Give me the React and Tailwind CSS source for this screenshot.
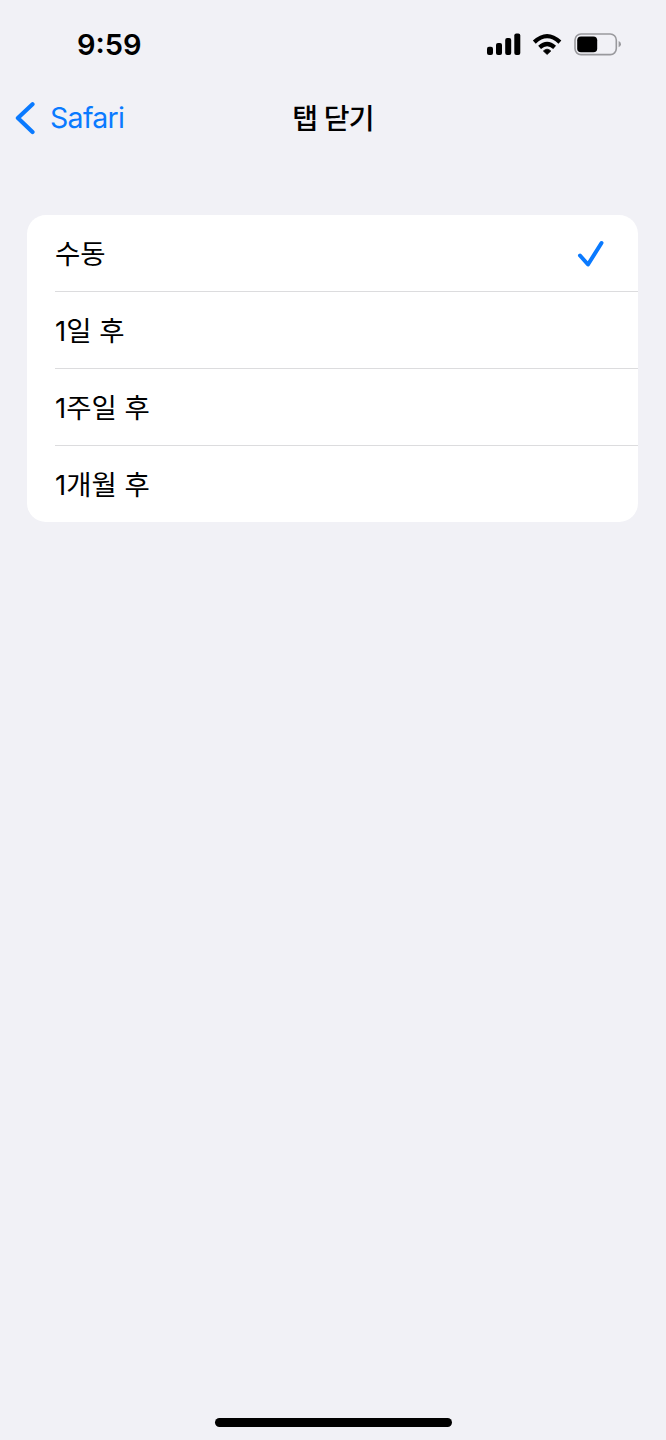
const OPTIONS = ['수동', '1일 후', '1주일 후', '1개월 후'];

function StatusIcons() {
  return (
    <svg className="block h-[30px] w-[140px]" viewBox="484 29 140 30">
      <g fill="#000">
        <rect x="487" y="46.8" width="6" height="8.2" rx="2" />
        <rect x="496" y="43" width="6" height="12" rx="2" />
        <rect x="505.2" y="38" width="6" height="17" rx="2" />
        <rect x="514.3" y="33.5" width="6" height="21.5" rx="2" />
        <path d="M543.4 51Q547.1 47.4 550.8 51L547.1 54.4Z" stroke="#000" strokeWidth="0.8" strokeLinejoin="round" />
      </g>
      <g fill="none" stroke="#000" strokeWidth="4.2">
        <path d="M534.3 42.1Q547.1 30.1 559.9 42.1" />
        <path d="M539.6 47.4Q547.1 40.6 554.6 47.4" />
      </g>
      <rect x="575" y="34" width="41.3" height="20.6" rx="6" fill="none" stroke="#99999d" strokeWidth="1.6" />
      <rect x="577.2" y="36.4" width="20" height="15.8" rx="3.8" fill="#000" />
      <path d="M618.6 41.1Q621 42.2 621 44.2T618.6 47.3Z" fill="#99999d" />
    </svg>
  );
}

export default function App() {
  return (
    <div className="flex h-[1440px] w-[666px] flex-col bg-[#f1f1f6] font-['Inter','Noto_Sans_CJK_KR',sans-serif] text-black">
      <header className="flex h-[88px] items-center justify-between pr-[42px] pl-[77px]">
        <span className="flex text-[29px] leading-none font-semibold">
          <span>9</span>
          <span className="-translate-y-0.5">:</span>
          <span>59</span>
        </span>
        <StatusIcons />
      </header>
      <nav className="grid h-[60px] grid-cols-3 items-center">
        <button className="flex items-center gap-[14px] pl-[15px] text-[#0a7aff]">
          <svg className="h-[34px] w-[21px]" viewBox="0 0 21 34" fill="none" stroke="currentColor" strokeWidth="4.2" strokeLinecap="round" strokeLinejoin="round">
            <path d="M17.5 3.2 2.9 17 17.5 31" />
          </svg>
          <span className="pt-px text-[28.5px] leading-none tracking-[-0.7px]">Safari</span>
        </button>
        <h1 className="pt-0.5 text-center text-[28px] leading-none font-medium tracking-[-0.8px]">탭 닫기</h1>
      </nav>
      <ul className="mr-[28px] ml-[27px] mt-[67px] flex h-[307px] flex-col overflow-hidden rounded-[19px] bg-white pl-[28px]">
        {OPTIONS.map((label, index) => (
          <li key={label} className="flex flex-1 items-center justify-between border-b border-[#dcdcde] pr-[33px] last:border-b-0">
            <span className="pt-1 text-[27.5px] leading-none">{label}</span>
            {index === 0 && (
              <svg className="h-[28px] w-[28px]" viewBox="0 0 28 28" fill="none" stroke="#0a7aff" strokeWidth="4" strokeLinecap="round" strokeLinejoin="round">
                <path d="M3 16.5 11 25.5 24.5 4" />
              </svg>
            )}
          </li>
        ))}
      </ul>
      <div className="mt-auto mb-[13.5px] ml-[215px] h-[9px] w-[237px] rounded-full bg-black" />
    </div>
  );
}
